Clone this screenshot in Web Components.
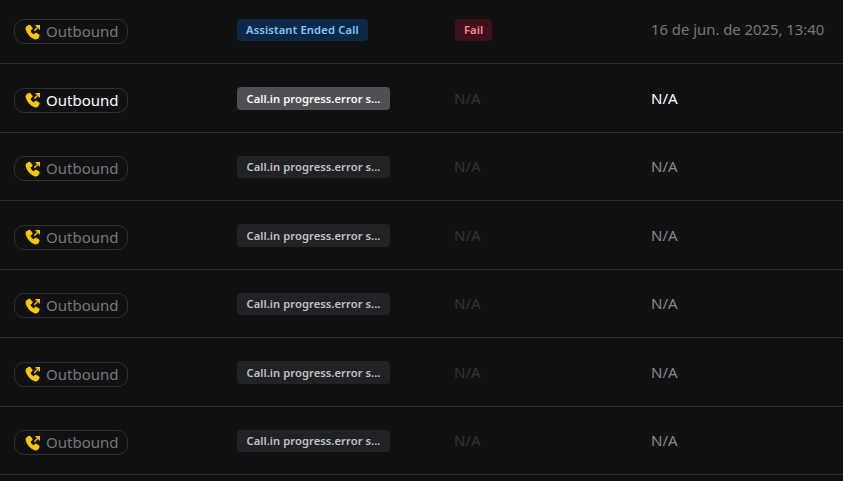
<!DOCTYPE html>
<html><head><meta charset="utf-8"><style>
html,body{margin:0;padding:0;background:#111113;height:100%;overflow:hidden}
body{font-family:"Noto Sans",sans-serif}
call-list{margin-top:-4.5px}
</style></head><body>
<call-list>
<call-row date="16 de jun. de 2025, 13:40"><status-tag kind="blue">Assistant Ended Call</status-tag><status-tag kind="red" slot="result">Fail</status-tag></call-row>
<call-row hot><status-tag kind="hot">Call.in progress.error s...</status-tag></call-row>
<call-row><status-tag>Call.in progress.error s...</status-tag></call-row>
<call-row><status-tag>Call.in progress.error s...</status-tag></call-row>
<call-row><status-tag>Call.in progress.error s...</status-tag></call-row>
<call-row><status-tag>Call.in progress.error s...</status-tag></call-row>
<call-row><status-tag>Call.in progress.error s...</status-tag></call-row>
</call-list>
<script>
class CallList extends HTMLElement{constructor(){super();this.attachShadow({mode:'open'}).innerHTML=`<style>:host{display:block}</style><slot></slot>`}}
class StatusTag extends HTMLElement{constructor(){super();this.attachShadow({mode:'open'}).innerHTML=`<style>
:host{display:inline-flex;align-items:center;height:22.500px;padding:0 9.500px;border-radius:4px;font:600 11.200px/1 "Noto Sans",sans-serif;background:#212225;color:#c2c2c6;white-space:nowrap;box-sizing:border-box;letter-spacing:.05px}
:host([kind=blue]){background:#0d2847;color:#7cc8ff;letter-spacing:.15px;padding:0 9px}
:host([kind=red]){background:#3f111b;color:#ff8a92;padding:0 9px}
:host([kind=hot]){background:#505054;color:#f8f8fa}
</style><slot></slot>`}}
class CallRow extends HTMLElement{constructor(){super();const hot=this.hasAttribute('hot');const d=this.getAttribute('date');
this.attachShadow({mode:'open'}).innerHTML=`<style>
:host{display:grid;grid-template-columns:237px 218px 196px 1fr;align-items:center;height:68.5px;box-sizing:border-box;border-bottom:1px solid #2e2e31;font:15px/1 "Noto Sans",sans-serif}
.p{display:inline-flex;align-items:center;gap:5px;margin-left:14px;width:114px;height:25px;box-sizing:border-box;padding-left:10px;border:1px solid #303033;border-radius:10px;color:${hot?'#fff':'#77777b'};position:relative;top:2.500px}
svg{width:16px;height:16px;flex:none}
.na{color:#333336;margin-left:-1px;display:inline-block}.d{color:${d?'#77777b':hot?'#fff':'#88888c'};white-space:nowrap;font-size:${d?'14.850px':'15px'}}
.t{position:relative;top:.5px}
</style>
<div><span class="p"><svg viewBox="0 0 16 16"><path fill="#fac800" d="M4 .8 1.900 1.900C.6 2.700.3 4.200.8 5.800c1.200 4.200 4.800 8.300 8.700 9.400 1.700.5 3.200.1 4-1.200l1-1.900c.3-.6.1-1.200-.4-1.500l-2.700-1.800c-.5-.3-1.100-.2-1.500.2l-.8 1c-.3.300-.6.300-.9.100-1.100-.7-2-1.900-2.500-3.100-.1-.3 0-.6.300-.8l1.100-.8c.5-.4.7-1 .4-1.600L5.500 1.300C5.100.7 4.500.5 4 .8Z"/><path fill="none" stroke="#fac800" stroke-width="1.400" d="M9.300 6.700 14 2M10.500 1.700h3.800v3.800"/></svg>Outbound</span></div>
<div class="t"><slot></slot></div>
<div class="t"><slot name="result"><span class="na">N/A</span></slot></div>
<div class="d t">${d||'N/A'}</div>`}}
customElements.define('call-list',CallList);customElements.define('status-tag',StatusTag);customElements.define('call-row',CallRow);
</script></body></html>
